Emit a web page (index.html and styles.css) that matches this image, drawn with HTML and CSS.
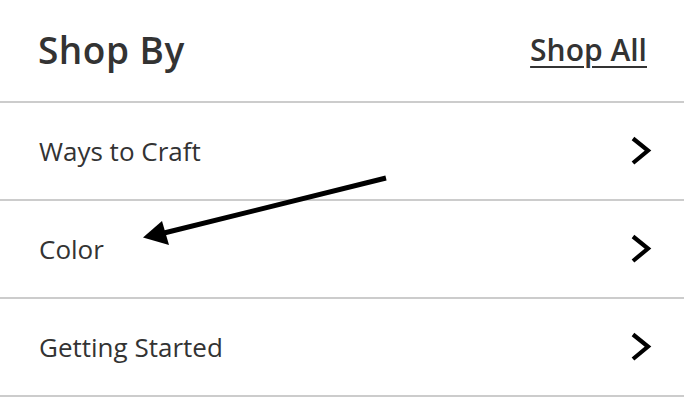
FILE: index.html
```html
<!DOCTYPE html>
<html lang="en">
<head>
<meta charset="utf-8">
<title>Shop By</title>
<link rel="stylesheet" href="styles.css">
</head>
<body>
<div class="panel">
  <header class="head">
    <h2 class="title">Shop By</h2>
    <a class="all" href="#">Shop All</a>
  </header>
  <ul class="menu">
    <li class="row"><span class="label">Ways to Craft</span><svg class="chev" width="22" height="30" viewBox="0 0 22 30"><path d="M3 2.5 L18 14.5 L3 27" fill="none" stroke="#000" stroke-width="4.2"/></svg></li>
    <li class="row"><span class="label">Color</span><svg class="chev" width="22" height="30" viewBox="0 0 22 30"><path d="M3 2.5 L18 14.5 L3 27" fill="none" stroke="#000" stroke-width="4.2"/></svg></li>
    <li class="row"><span class="label">Getting Started</span><svg class="chev" width="22" height="30" viewBox="0 0 22 30"><path d="M3 2.5 L18 14.5 L3 27" fill="none" stroke="#000" stroke-width="4.2"/></svg></li>
  </ul>
  <svg class="arrow" width="684" height="416" viewBox="0 0 684 416">
    <line x1="386" y1="178" x2="160" y2="234" stroke="#000" stroke-width="5"/>
    <polygon points="143,237.5 162,221 169,245" fill="#000"/>
  </svg>
</div>
</body>
</html>
```
FILE: styles.css
```css
html, body {
  margin: 0;
  padding: 0;
  background: #fff;
}
body {
  font-family: "Open Sans", "Liberation Sans", sans-serif;
  color: #333;
  width: 684px;
  height: 416px;
  overflow: hidden;
}
.panel {
  position: relative;
  height: 416px;
}
.head {
  height: 103px;
  box-sizing: border-box;
  border-bottom: 2px solid #cccccc;
  display: flex;
  align-items: center;
  justify-content: space-between;
  padding: 0 37px 2px 38px;
}
.title {
  margin: 0;
  font-size: 37px;
  font-weight: 600;
  line-height: 1;
  letter-spacing: 0.5px;
  color: #333;
}
.all {
  font-size: 30px;
  font-weight: 600;
  line-height: 1;
  color: #333;
  text-decoration: underline;
  text-decoration-thickness: 2px;
  text-underline-offset: 5px;
}
.menu {
  list-style: none;
  margin: 0;
  padding: 0;
}
.row {
  height: 98px;
  box-sizing: border-box;
  border-bottom: 2px solid #cccccc;
  display: flex;
  align-items: center;
  justify-content: space-between;
  padding: 0 32px 0 39px;
}
.label {
  font-size: 26px;
  font-weight: 400;
  line-height: 1;
  color: #333;
}
.chev {
  display: block;
}
.arrow {
  position: absolute;
  left: 0;
  top: 0;
  pointer-events: none;
}
```
